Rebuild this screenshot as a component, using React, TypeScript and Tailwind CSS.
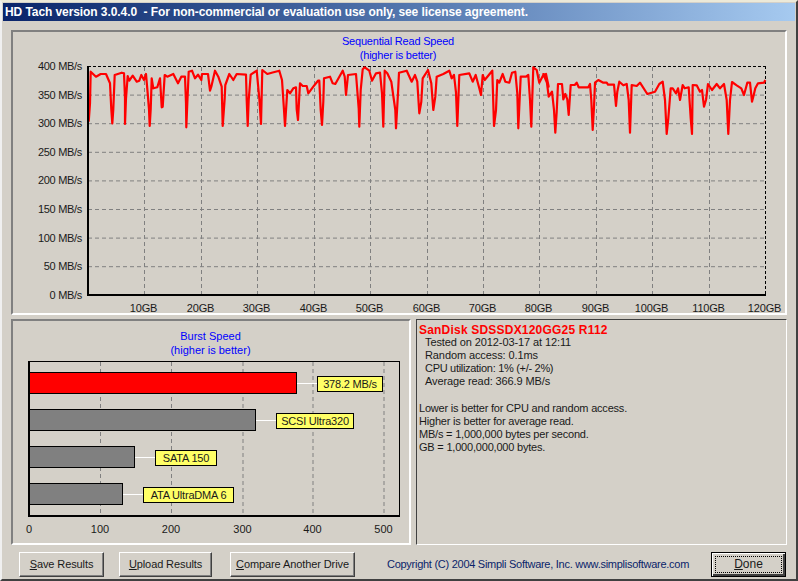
import React from 'react';

// traced from the run, grouped by crop: [originX, [x*3, y*3 ...]]
const trace: [number, number[][]][] = [
  [80, [[26,185],[30,130],[32,35],[48,50],[62,42],[78,42],[90,70],[94,148],[97,190],[100,148],[104,45],[125,38],[132,40],[135,115],[135,192],[138,115],[143,48],[148,62],[158,47],[170,65],[178,62],[184,45],[192,60],[198,42],[203,100],[207,148],[209,198],[212,148],[215,55],[220,85],[232,82],[240,55],[245,142],[248,140],[254,45],[262,50],[280,42],[294,70],[304,50],[315,50],[318,130],[319,202],[322,130],[326,35],[336,32],[345,55],[354,44],[364,60],[366,42],[384,42],[390,92],[394,80],[405,32],[415,50],[425,80],[428,198],[434,115],[436,75],[448,42],[460,60],[470,42],[498,44],[500,120],[503,198],[506,120],[512,44],[530,32],[538,115],[543,192],[547,30],[562,42],[575,38],[598,32],[606,60],[612,150],[615,198],[622,90],[630,100],[640,85],[648,82],[650,148],[654,180],[660,70],[668,78],[680,78],[685,100],[700,80],[714,62]]],
  [310, [[28,62],[32,150],[36,195],[40,125],[42,55],[60,50],[68,70],[76,72],[98,32],[104,50],[108,105],[114,45],[138,42],[146,145],[148,200],[152,90],[158,28],[164,22],[178,32],[186,62],[198,40],[210,38],[216,100],[220,200],[224,32],[232,40],[244,65],[256,150],[258,205],[264,100],[267,38],[290,32],[305,65],[315,45],[322,65],[328,160],[334,125],[338,55],[354,30],[364,70],[370,150],[376,110],[380,50],[400,42],[418,32],[425,55],[432,45],[438,98],[442,198],[448,45],[478,40],[488,65],[497,45],[508,85],[513,105],[518,45],[524,60],[547,32],[552,198],[558,150],[562,60],[568,68],[578,42],[586,65],[598,68],[606,38],[616,35],[622,100],[625,205],[632,50],[648,50],[655,45],[660,120],[664,200],[670,22],[680,30],[688,68],[700,45],[708,42],[716,80]]],
  [540, [[10,42],[18,45],[26,110],[36,95],[42,150],[46,218],[50,155],[54,72],[66,72],[70,118],[76,102],[82,118],[86,165],[92,75],[104,75],[110,68],[116,82],[145,82],[150,72],[154,120],[158,210],[162,140],[165,68],[175,60],[190,68],[200,68],[204,74],[222,74],[228,138],[232,95],[238,65],[250,76],[260,72],[266,120],[270,218],[275,75],[290,78],[300,68],[322,102],[345,95],[358,72],[368,65],[375,120],[380,222],[385,175],[392,85],[398,85],[408,100],[414,85],[420,120],[428,75],[434,85],[446,82],[452,175],[456,222],[458,75],[470,76],[480,95],[486,90],[492,140],[498,120],[504,72],[516,90],[530,72],[540,85],[552,72],[560,120],[565,222],[570,120],[576,66],[590,76],[604,85],[612,105],[622,68],[630,68],[636,125],[640,110],[646,85],[654,70],[672,68],[676,60]]],
];

const linePoints = trace
  .flatMap(([ox, pts]) => pts.map(([x, y]) => `${(ox + x / 3).toFixed(1)},${(60 + y / 3).toFixed(1)}`))
  .join(' ');

const speedLabels = ['400 MB/s', '350 MB/s', '300 MB/s', '250 MB/s', '200 MB/s', '150 MB/s', '100 MB/s', '50 MB/s', '0 MB/s'];
const gbLines = [144.5, 201.5, 257.5, 314.5, 370.5, 427.5, 483.5, 539.5, 596.5, 652.5, 709.5, 765.5];

// coordinates below are page pixels, the g shifts them back by the panel origin (13, 32)
const SequentialChart = () => (
  <svg width="772" height="281" className="block" style={{ fontFamily: '"Liberation Sans", Arial, sans-serif' }}>
    <g transform="translate(-13 -32)">
      {speedLabels.map((label, i) => (
        <g key={label}>
          <text x="82" y={70 + i * 28.6} textAnchor="end" fontSize="11" letterSpacing="-0.3" fill="#1a1a1a">{label}</text>
          {i > 0 && i < 8 && <line x1="88" x2="765" y1={66.5 + i * 28.6} y2={66.5 + i * 28.6} stroke="#808080" strokeDasharray="4 3" />}
        </g>
      ))}
      {gbLines.map((x, i) => (
        <g key={x}>
          {i < 11 && <line x1={x} x2={x} y1="67" y2="295" stroke="#808080" strokeDasharray="4 3" />}
          <text x={x - 1} y="312" textAnchor="middle" fontSize="11" letterSpacing="-0.2" fill="#1a1a1a">{(i + 1) * 10}GB</text>
        </g>
      ))}
      <line x1="88" x2="765" y1="66.5" y2="66.5" stroke="#000" strokeDasharray="3 2" />
      <line x1="765.5" x2="765.5" y1="66" y2="295" stroke="#000" strokeDasharray="3 2" />
      <polyline points={linePoints} fill="none" stroke="#ff0000" strokeWidth="2.2" strokeLinejoin="round" />
      <line x1="88" x2="88" y1="66" y2="296" stroke="#000" strokeWidth="2" />
      <line x1="87" x2="766" y1="295" y2="295" stroke="#000" strokeWidth="2" />
    </g>
  </svg>
);

const bars = [
  { label: '378.2 MB/s', end: 296, fill: '#ff0000', top: 373, boxX: 317, boxW: 65 },
  { label: 'SCSI Ultra320', end: 255, fill: '#808080', top: 410, boxX: 276, boxW: 77 },
  { label: 'SATA 150', end: 134, fill: '#808080', top: 447, boxX: 155, boxW: 61 },
  { label: 'ATA UltraDMA 6', end: 122, fill: '#808080', top: 484, boxX: 143, boxW: 90 },
];
const burstTicks = [29, 100, 171, 242.5, 312.5, 383.5];

const BurstChart = () => (
  <svg width="394" height="180" className="block" style={{ fontFamily: '"Liberation Sans", Arial, sans-serif' }}>
    <g transform="translate(-13 -362)">
      <rect x="28.5" y="362.5" width="371" height="154" fill="none" stroke="#000" />
      {burstTicks.slice(1).map((x) => (
        <line key={x} x1={x + 0.5} x2={x + 0.5} y1="363" y2="516" stroke="#808080" strokeDasharray="4 3" />
      ))}
      {bars.map((b) => (
        <g key={b.label}>
          <rect x="29.5" y={b.top + 0.5} width={b.end - 29} height="21" fill={b.fill} stroke="#000" />
          <line x1={b.end + 1} x2={b.boxX} y1={b.top + 11.5} y2={b.top + 11.5} stroke="#fff" />
          <rect x={b.boxX + 0.5} y={b.top + 4.5} width={b.boxW} height="15" fill="#ffff66" stroke="#000" />
          <text x={b.boxX + b.boxW / 2 + 0.5} y={b.top + 16} textAnchor="middle" fontSize="11" letterSpacing="-0.2" fill="#1a1a1a">{b.label}</text>
        </g>
      ))}
      <line x1="29" x2="29" y1="362" y2="518" stroke="#000" strokeWidth="2" />
      <line x1="28" x2="400" y1="517" y2="517" stroke="#000" strokeWidth="2" />
      {burstTicks.map((x, i) => (
        <text key={x} x={x} y="534" textAnchor="middle" fontSize="11" fill="#1a1a1a">{i * 100}</text>
      ))}
    </g>
  </svg>
);

const Button = ({ hot, rest, width }: { hot: string; rest: string; width: string }) => (
  <button className={`h-[25px] ${width} shrink-0 whitespace-nowrap border border-t-white border-l-white border-r-[#404040] border-b-[#404040] text-[11px] tracking-[-0.1px] text-[#1a1a1a] shadow-[inset_-1px_-1px_0_#808080]`}>
    <span className="underline">{hot}</span>{rest}
  </button>
);

export default function App() {
  return (
    <div className="w-[798px] h-[581px] bg-[#d4d0c8] border-t-2 border-t-[#ece9d8] border-b-2 border-b-[#404040] border-l-2 border-l-[#f0f0f0] border-r-2 border-r-[#404040] overflow-hidden font-['Liberation_Sans',Arial,sans-serif]">
      <div className="h-[18px] mt-px mx-px flex items-center pl-[2px] bg-gradient-to-r from-[#0a246a] to-[#a6caf0] text-white text-[12px] tracking-[-0.08px] font-bold whitespace-pre">
        HD Tach version 3.0.4.0  - For non-commercial or evaluation use only, see license agreement.
      </div>

      <div className="flex flex-col gap-[4px] mt-[9px] ml-[9px] w-[776px]">
        <div className="relative h-[285px] border-2 border-t-[#808080] border-l-[#808080] border-r-white border-b-white">
          <div className="absolute inset-x-0 top-[2px] text-center text-[11px] tracking-[-0.2px] leading-[14px] text-[#0000ff] pr-[2px]">
            <div>Sequential Read Speed</div>
            <div>(higher is better)</div>
          </div>
          <SequentialChart />
        </div>

        <div className="flex gap-[5px] h-[226px]">
          <div className="w-[400px] border-2 border-t-[#808080] border-l-[#808080] border-r-white border-b-white">
            <div className="text-center text-[11px] leading-[14px] text-[#0000ff] pt-[8px] pr-[1px] h-[40px]">
              <div>Burst Speed</div>
              <div>(higher is better)</div>
            </div>
            <BurstChart />
          </div>
          <div className="flex-1 border border-t-[#404040] border-l-[#404040] border-r-white border-b-white pl-[2px] pt-[4px] text-[11px] leading-[13px] text-[#1a1a1a]">
            <div className="font-bold text-[#ff0000] text-[12px] leading-[12px] tracking-[0.2px]">SanDisk SDSSDX120GG25 R112</div>
            <div className="pl-[6px] tracking-[-0.1px]">
              <div>Tested on 2012-03-17 at 12:11</div>
              <div>Random access: 0.1ms</div>
              <div className="tracking-[-0.3px]">CPU utilization: 1% (+/- 2%)</div>
              <div>Average read: 366.9 MB/s</div>
            </div>
            <div className="mt-[14px] tracking-[-0.2px]">
              <div>Lower is better for CPU and random access.</div>
              <div>Higher is better for average read.</div>
              <div>MB/s = 1,000,000 bytes per second.</div>
              <div>GB = 1,000,000,000 bytes.</div>
            </div>
          </div>
        </div>

        <div className="flex items-center h-[30px] pl-[8px]">
          <Button hot="S" rest="ave Results" width="w-[85px]" />
          <div className="w-[15px] shrink-0" />
          <Button hot="U" rest="pload Results" width="w-[93px]" />
          <div className="w-[18px] shrink-0" />
          <Button hot="C" rest="ompare Another Drive" width="w-[125px]" />
          <div className="ml-[32px] text-[11px] tracking-[-0.27px] text-[#0a246a] whitespace-nowrap">Copyright (C) 2004 Simpli Software, Inc. www.simplisoftware.com</div>
          <button className="ml-auto mr-px h-[25px] w-[75px] shrink-0 border border-black text-[12px] text-[#1a1a1a] p-[3px] shadow-[inset_1px_1px_0_#fff,inset_-2px_-2px_0_#404040]">
            <span className="flex items-center justify-center w-full h-full border border-dotted border-black"><span><span className="underline">D</span>one</span></span>
          </button>
        </div>
      </div>
    </div>
  );
}
